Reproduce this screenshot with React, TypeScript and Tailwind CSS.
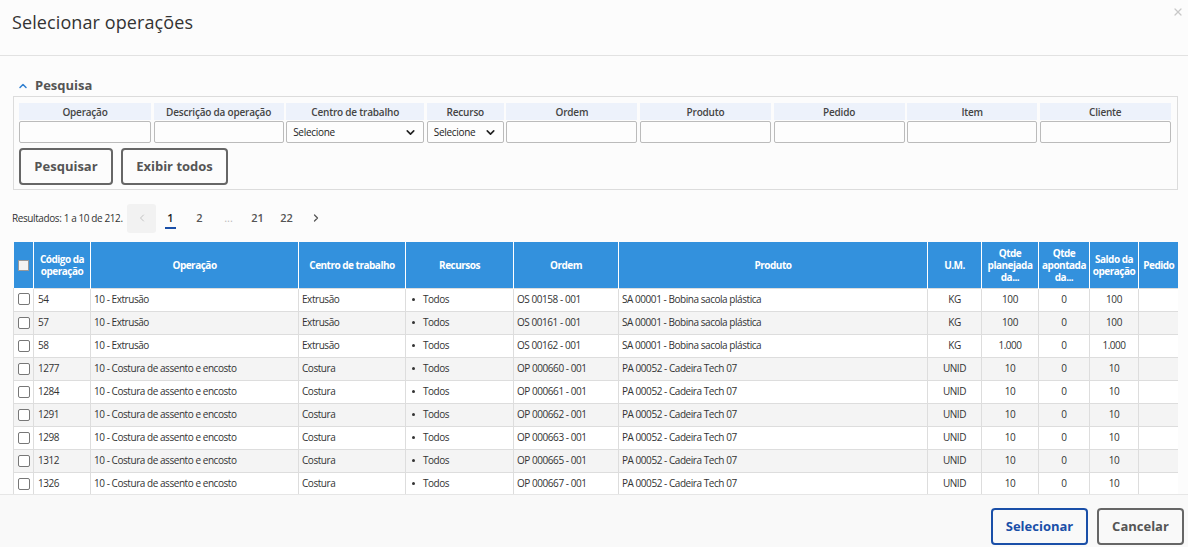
import { ChevronDown, ChevronLeft, ChevronRight, ChevronUp, X } from 'lucide-react';

const filters = [
  { label: 'Operação', w: 'w-[132px]' },
  { label: 'Descrição da operação', w: 'w-[130px]' },
  { label: 'Centro de trabalho', w: 'w-[138px]', select: true },
  { label: 'Recurso', w: 'w-[77px]', select: true },
  { label: 'Ordem', w: 'w-[131px]' },
  { label: 'Produto', w: 'w-[131px]' },
  { label: 'Pedido', w: 'w-[131px]' },
  { label: 'Item', w: 'w-[130px]' },
  { label: 'Cliente', w: 'w-[131px]' },
];

const cols = [
  { label: '', w: 20 },
  { label: 'Código da operação', w: 57 },
  { label: 'Operação', w: 208 },
  { label: 'Centro de trabalho', w: 107 },
  { label: 'Recursos', w: 108 },
  { label: 'Ordem', w: 105 },
  { label: 'Produto', w: 309 },
  { label: 'U.M.', w: 54 },
  { label: 'Qtde planejada da...', w: 57 },
  { label: 'Qtde apontada da...', w: 51 },
  { label: 'Saldo da operação', w: 49 },
  { label: 'Pedido', w: 40 },
];

const extr = 'SA 00001 - Bobina sacola plástica';
const cad = 'PA 00052 - Cadeira Tech 07';
const rows = [
  ['54', '10 - Extrusão', 'Extrusão', 'OS 00158 - 001', extr, 'KG', '100', '0', '100'],
  ['57', '10 - Extrusão', 'Extrusão', 'OS 00161 - 001', extr, 'KG', '100', '0', '100'],
  ['58', '10 - Extrusão', 'Extrusão', 'OS 00162 - 001', extr, 'KG', '1.000', '0', '1.000'],
  ['1277', '10 - Costura de assento e encosto', 'Costura', 'OP 000660 - 001', cad, 'UNID', '10', '0', '10'],
  ['1284', '10 - Costura de assento e encosto', 'Costura', 'OP 000661 - 001', cad, 'UNID', '10', '0', '10'],
  ['1291', '10 - Costura de assento e encosto', 'Costura', 'OP 000662 - 001', cad, 'UNID', '10', '0', '10'],
  ['1298', '10 - Costura de assento e encosto', 'Costura', 'OP 000663 - 001', cad, 'UNID', '10', '0', '10'],
  ['1312', '10 - Costura de assento e encosto', 'Costura', 'OP 000665 - 001', cad, 'UNID', '10', '0', '10'],
  ['1326', '10 - Costura de assento e encosto', 'Costura', 'OP 000667 - 001', cad, 'UNID', '10', '0', '10'],
];

function Box({ head }: { head?: boolean }) {
  return (
    <div
      className={
        head
          ? 'w-[11px] h-[11px] mx-auto border border-[#999] bg-[#f3f3f3]'
          : 'w-[12px] h-[12px] mx-auto rounded-[2px] border border-[#777] bg-white'
      }
    />
  );
}

export default function App() {
  return (
    <div
      className="h-[547px] w-[1188px] flex flex-col bg-[#fcfcfc] text-[#333] overflow-hidden"
      style={{ fontFamily: '"Open Sans", "Noto Sans", sans-serif' }}
    >
      {/* cabeçalho */}
      <div className="relative h-[56px] shrink-0 border-b border-[#e2e2e2] flex items-center px-3">
        <h1 className="text-[18px] tracking-[0.1px] text-[#333] -mt-[10px]">Selecionar operações</h1>
        <X size={12} strokeWidth={2.5} className="absolute right-[4px] top-[6px] text-[#c8c8c8]" />
      </div>

      <div className="flex-1 overflow-hidden px-[13px]">
        <div className="flex items-center gap-[6px] mt-[21px] pl-[4px] h-[18px]">
          <ChevronUp size={12} strokeWidth={3} className="text-[#2f7fd0]" />
          <span className="text-[13px] font-bold text-[#555]">Pesquisa</span>
        </div>

        <div className="mt-[1px] w-[1165px] h-[94px] border border-[#dcdcdc] px-[5px] pt-[6px]">
          <div className="flex gap-[2.6px]">
            {filters.map(f => (
              <div key={f.label} className={`${f.w} shrink-0 flex flex-col gap-[1px]`}>
                <div className="h-[17px] pt-[2px] bg-[#edf2fb] text-[10px] font-semibold tracking-[-0.2px] text-[#444] flex items-center justify-center">
                  {f.label}
                </div>
                <div className="h-[22px] border border-[#bbb] rounded-[2px] bg-[#fdfdfd] flex items-center justify-between px-[6px]">
                  {f.select && (
                    <>
                      <span className="text-[10px] tracking-[-0.3px] text-[#222]">Selecione</span>
                      <ChevronDown size={13} strokeWidth={3} className="text-[#222]" />
                    </>
                  )}
                </div>
              </div>
            ))}
          </div>
          <div className="flex gap-[8px] mt-[5px]">
            <button className="w-[94px] h-[37px] border-2 border-[#666] rounded-[4px] text-[13px] font-bold text-[#555]">
              Pesquisar
            </button>
            <button className="w-[107px] h-[37px] border-2 border-[#666] rounded-[4px] text-[13px] font-bold text-[#555]">
              Exibir todos
            </button>
          </div>
        </div>

        {/* paginação */}
        <div className="flex items-center mt-[13px] h-[30px]">
          <span className="text-[10px] tracking-[-0.4px] whitespace-nowrap text-[#333] w-[115px] -ml-[1px]">
            Resultados: 1 a 10 de 212.
          </span>
          <div className="w-[29px] h-[29px] rounded-[3px] bg-[#f2f2f2] flex items-center justify-center">
            <ChevronLeft size={12} className="text-[#c3c3c3]" />
          </div>
          <div className="flex items-center text-[11px] font-semibold text-[#555]">
            <span className="relative w-[29px] text-center text-[#222]">
              1
              <span className="absolute left-[9px] top-[17px] w-[11px] h-[2px] bg-[#1a4fa8]" />
            </span>
            <span className="w-[29px] text-center">2</span>
            <span className="w-[29px] text-center text-[#bbb] font-normal">...</span>
            <span className="w-[29px] text-center">21</span>
            <span className="w-[29px] text-center">22</span>
            <span className="w-[29px] flex justify-center">
              <ChevronRight size={12} strokeWidth={2.5} className="text-[#555]" />
            </span>
          </div>
        </div>

        {/* tabela */}
        <div className="mt-[9px] w-[1165px] overflow-hidden h-[253px]">
          <table className="table-fixed border-collapse w-[1165px]">
            <colgroup>
              {cols.map((c, i) => (
                <col key={i} style={{ width: c.w }} />
              ))}
            </colgroup>
            <thead>
              <tr className="bg-[#3391dd] h-[46px]">
                {cols.map((c, i) => (
                  <th
                    key={i}
                    className="border-l border-white first:border-l-0 px-[1px] text-[10px] font-bold tracking-[-0.5px] text-white leading-[12px] align-middle text-center"
                  >
                    {i === 0 ? <Box head /> : c.label}
                  </th>
                ))}
              </tr>
            </thead>
            <tbody>
              {rows.map((r, i) => (
                <tr
                  key={r[0]}
                  className={`h-[23px] text-[10px] tracking-[-0.45px] ${i % 2 ? 'bg-[#f4f4f4]' : 'bg-white'}`}
                >
                  <td className="border border-[#ddd] border-t-0 px-[2px]"><Box /></td>
                  <td className="border border-[#ddd] px-[4px]">{r[0]}</td>
                  <td className="border border-[#ddd] px-[3px]">{r[1]}</td>
                  <td className="border border-[#ddd] px-[3px]">{r[2]}</td>
                  <td className="border border-[#ddd] px-[6px]">
                    <span className="flex items-center gap-[8px]">
                      <span className="w-[3px] h-[3px] rounded-full bg-[#333]" />
                      Todos
                    </span>
                  </td>
                  <td className="border border-[#ddd] px-[3px]">{r[3]}</td>
                  <td className="border border-[#ddd] px-[3px]">{r[4]}</td>
                  <td className="border border-[#ddd] text-center">{r[5]}</td>
                  <td className="border border-[#ddd] text-center">{r[6]}</td>
                  <td className="border border-[#ddd] text-center">{r[7]}</td>
                  <td className="border border-[#ddd] text-center">{r[8]}</td>
                  <td className="border border-[#ddd]"></td>
                </tr>
              ))}
            </tbody>
          </table>
        </div>
      </div>

      {/* rodapé */}
      <div className="h-[53px] shrink-0 border-t border-[#e6e6e6] bg-[#f9f9f9] flex items-end justify-end gap-[9px] pr-[4px] pb-[2px]">
        <button className="w-[97px] h-[37px] border-2 border-[#1a4fa8] rounded-[4px] text-[13px] font-bold text-[#1a4fa8]">
          Selecionar
        </button>
        <button className="w-[87px] h-[37px] border-2 border-[#666] rounded-[4px] text-[13px] font-bold text-[#555]">
          Cancelar
        </button>
      </div>
    </div>
  );
}
